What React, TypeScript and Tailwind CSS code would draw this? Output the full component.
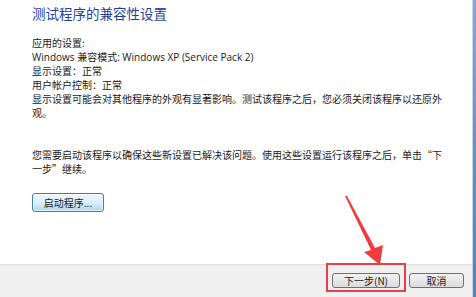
export default function App() {
  const font = { fontFamily: '"Noto Sans CJK SC", "Liberation Sans", sans-serif' };
  const latin = { fontFamily: '"Open Sans", "Noto Sans CJK SC", sans-serif' };

  return (
    <div className="relative w-[476px] h-[297px] overflow-hidden bg-white flex" style={font}>
      {/* Dialog body */}
      <div className="flex-1 flex flex-col border-r border-[#c8d5e8]">
        <div className="h-[264px] pl-[32px] pr-[24px] text-[#1a1a1a]">
          <h1 className="mt-[4px] text-[13.5px] leading-[18px] text-[#1f3f9c] font-normal">
            测试程序的兼容性设置
          </h1>

          <div className="mt-[14px] text-[10px] leading-[14px]">
            <p>应用的设置:</p>
            <p style={latin}>Windows 兼容模式: Windows XP (Service Pack 2)</p>
            <p>显示设置：正常</p>
            <p>用户帐户控制：正常</p>
            <p>显示设置可能会对其他程序的外观有显著影响。测试该程序之后，您必须关闭该程序以还原外观。</p>
          </div>

          <p className="mt-[28px] text-[10px] leading-[14px]">
            您需要启动该程序以确保这些新设置已解决该问题。使用这些设置运行该程序之后，单击“下一步”继续。
          </p>

          <button className="mt-[17px] w-[72px] h-[19px] rounded-[3px] border border-[#3c7fb1] bg-gradient-to-b from-[#eaf6fd] via-[#d9f0fc] to-[#a7d9f5] text-[10px] leading-none text-[#1a1a1a] shadow-[inset_0_0_0_1px_rgba(255,255,255,0.7)]">
            启动程序...
          </button>
        </div>

        {/* Footer */}
        <div className="flex-1 bg-[#f0f0f0] border-t border-[#dfdfdf] flex justify-end items-start gap-[9px] pt-[8px] pr-[8px]">
          <button className="w-[68px] h-[15px] rounded-[3px] border border-[#707070] bg-gradient-to-b from-[#f2f2f2] to-[#dcdcdc] text-[10px] leading-none text-[#1a1a1a]">
            下一步(N)
          </button>
          <button className="w-[55px] h-[15px] rounded-[3px] border border-[#707070] bg-gradient-to-b from-[#f2f2f2] to-[#dcdcdc] text-[10px] leading-none text-[#1a1a1a]">
            取消
          </button>
        </div>
      </div>
      <div className="w-[3px] bg-gradient-to-b from-[#8aa6cc] via-[#6f8fbb] to-[#5f80ad]" />

      {/* Annotation: red box */}
      <div className="absolute left-[326px] top-[263px] w-[80px] h-[29px] border-2 border-[#e8404a]" />

      {/* Annotation: red arrow */}
      <svg className="absolute left-0 top-0" width="476" height="297" viewBox="0 0 476 297">
        <polygon
          points="345,196 347,196 375,248 383,245 380,265 364,252 371,250"
          fill="#f23b3b"
        />
      </svg>
    </div>
  );
}
